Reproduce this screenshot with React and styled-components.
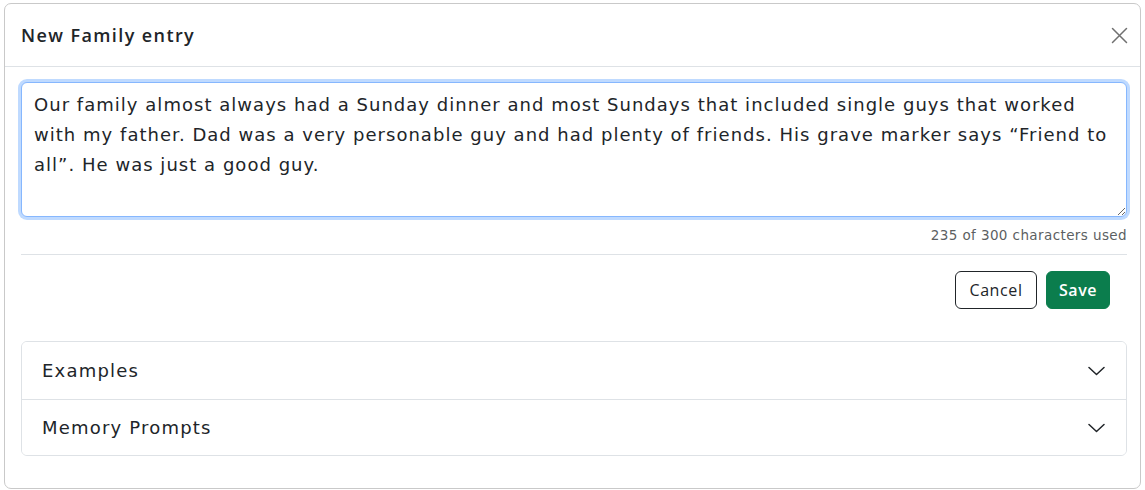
import React from "react";
import styled, { createGlobalStyle } from "styled-components";

const Global = createGlobalStyle`
  html, body { margin: 0; padding: 0; background: #ffffff; }
  body { font-family: "DejaVu Sans", sans-serif; color: #212529; }
  * { box-sizing: border-box; }
`;

const Page = styled.div`
  padding: 3px 4px 0 4px;
  width: 1145px;
  height: 490px;
  overflow: hidden;
`;

const Modal = styled.div`
  width: 1137px;
  height: 486px;
  border: 1px solid #c9c9c9;
  border-radius: 7px;
  background: #fff;
  display: flex;
  flex-direction: column;
`;

const Header = styled.div`
  height: 63px;
  display: flex;
  align-items: center;
  justify-content: space-between;
  padding: 0 7px 0 16px;
  border-bottom: 1px solid #dee2e6;
`;

const Title = styled.h1`
  margin: 0;
  font-family: "Open Sans", sans-serif;
  font-size: 18px;
  font-weight: 600;
  letter-spacing: 1.4px;
  color: #212529;
`;

const CloseButton = styled.button`
  border: none;
  background: transparent;
  width: 28px;
  height: 28px;
  padding: 0;
  display: flex;
  align-items: center;
  justify-content: center;
  cursor: pointer;
`;

const Body = styled.div`
  padding: 15px 13px 0 16px;
  display: flex;
  flex-direction: column;
`;

const TextArea = styled.textarea`
  width: 1106px;
  height: 135px;
  margin: 0;
  border: 1px solid #86b7fe;
  border-radius: 6px;
  box-shadow: 0 0 0 3px #bfdaff;
  padding: 7px 12px;
  font-family: "DejaVu Sans", sans-serif;
  font-size: 18px;
  letter-spacing: 1.03px;
  line-height: 30px;
  color: #212529;
  resize: vertical;
  outline: none;
`;

const Counter = styled.div`
  width: 1106px;
  text-align: right;
  font-size: 13.5px;
  letter-spacing: 0.4px;
  color: #5c5f62;
  margin-top: 10px;
  line-height: 16px;
`;

const Divider = styled.hr`
  width: 1106px;
  margin: 11px 0 0 0;
  border: none;
  border-top: 1px solid #dee2e6;
`;

const Actions = styled.div`
  width: 1089px;
  display: flex;
  justify-content: flex-end;
  gap: 9px;
  margin-top: 16px;
`;

const Button = styled.button`
  height: 38px;
  width: ${(p) => (p.$primary ? "64px" : "82px")};
  padding: 0;
  border-radius: 6px;
  font-family: "Open Sans", sans-serif;
  font-size: 16px;
  font-weight: ${(p) => (p.$primary ? 600 : 500)};
  letter-spacing: 0.6px;
  border: 1px solid ${(p) => (p.$primary ? "#0b7d4d" : "#212529")};
  background: ${(p) => (p.$primary ? "#0b7d4d" : "#fff")};
  color: ${(p) => (p.$primary ? "#fff" : "#212529")};
  cursor: pointer;
`;

const Accordion = styled.div`
  width: 1106px;
  margin-top: 32px;
  border: 1px solid #dee2e6;
  border-radius: 6px;
  overflow: hidden;
`;

const AccordionItem = styled.button`
  width: 100%;
  height: ${(p) => (p.$last ? "56px" : "57px")};
  display: flex;
  align-items: center;
  justify-content: space-between;
  padding: 0 21px 0 20px;
  border: none;
  border-top: ${(p) => (p.$first ? "none" : "1px solid #dee2e6")};
  background: #fff;
  font-family: "DejaVu Sans", sans-serif;
  font-size: 18px;
  letter-spacing: 1.2px;
  font-weight: 400;
  color: #212529;
  text-align: left;
  cursor: pointer;
`;

const text =
  "Our family almost always had a Sunday dinner and most Sundays that included single guys that worked with my father. Dad was a very personable guy and had plenty of friends. His grave marker says \u201cFriend to all\u201d. He was just a good guy.";

const CloseIcon = () => (
  <svg width="17" height="17" viewBox="0 0 17 17" fill="none">
    <path d="M1.5 1.5L15.5 15.5M15.5 1.5L1.5 15.5" stroke="#707070" strokeWidth="1.5" strokeLinecap="round" />
  </svg>
);

const Chevron = () => (
  <svg width="17" height="10" viewBox="0 0 17 10" fill="none">
    <path d="M1 1.5L8.5 8.5L16 1.5" stroke="#212529" strokeWidth="1.5" strokeLinecap="round" strokeLinejoin="round" />
  </svg>
);

export default function App() {
  return (
    <Page>
      <Global />
      <Modal>
        <Header>
          <Title>New Family entry</Title>
          <CloseButton aria-label="Close">
            <CloseIcon />
          </CloseButton>
        </Header>
        <Body>
          <TextArea defaultValue={text} />
          <Counter>235 of 300 characters used</Counter>
          <Divider />
          <Actions>
            <Button>Cancel</Button>
            <Button $primary>Save</Button>
          </Actions>
          <Accordion>
            <AccordionItem $first>
              Examples
              <Chevron />
            </AccordionItem>
            <AccordionItem $last>
              Memory Prompts
              <Chevron />
            </AccordionItem>
          </Accordion>
        </Body>
      </Modal>
    </Page>
  );
}
